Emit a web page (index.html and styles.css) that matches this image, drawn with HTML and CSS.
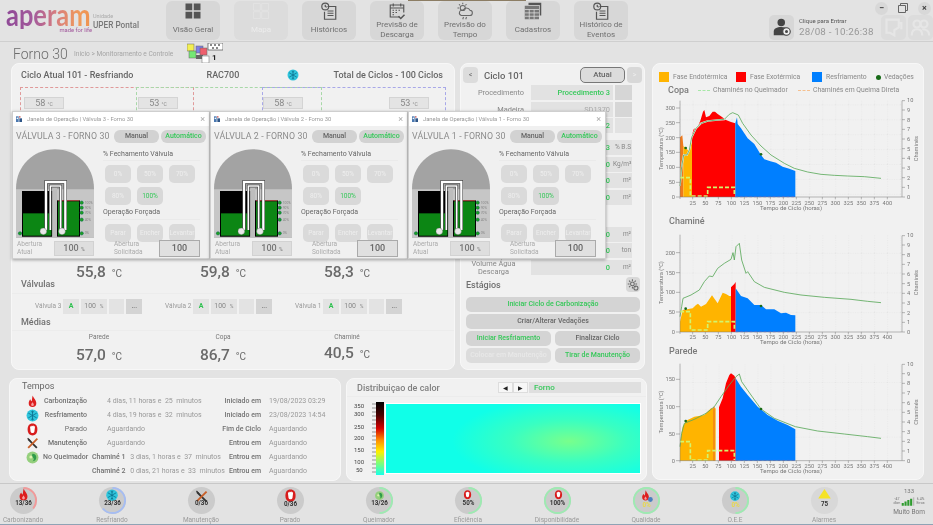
FILE: index.html
```html
<!DOCTYPE html>
<html lang="pt-BR">
<head>
<meta charset="utf-8">
<title>Forno 30</title>
<link rel="stylesheet" href="styles.css">
</head>
<body>
<svg class="defs" aria-hidden="true">
  <defs>
    <symbol id="i-grid" viewBox="0 0 24 24"><path d="M2 2h9v9H2zM13 2h9v9h-9zM2 13h9v9H2zM13 13h9v9h-9z"/></symbol>
    <symbol id="i-hist" viewBox="0 0 24 24"><g fill="none" stroke="#555" stroke-width="1.6"><path d="M10 6h11v17H6V13"/><circle cx="7" cy="6" r="4.6"/><path d="M7 3.5V6l2 1M10 12h8M10 15h8M10 18h8"/></g></symbol>
    <symbol id="i-cal" viewBox="0 0 24 24"><g fill="none" stroke="#555" stroke-width="1.5"><path d="M15 20H3V4h18v10"/><path d="M3 8h18M7 2v4M17 2v4"/><path d="M6 11h2M10 11h2M14 11h2M6 14h2M10 14h2M6 17h2"/><path d="M14 19l3 3 5-5" stroke-width="2"/></g></symbol>
    <symbol id="i-weather" viewBox="0 0 24 24"><g fill="none" stroke="#666" stroke-width="1.4"><circle cx="9" cy="8" r="3.4"/><path d="M9 1v2M2 8h2M4 3l1.5 1.5M14 3l-1.5 1.5"/><path d="M7 18h11a3.5 3.5 0 0 0 .6-7A5 5 0 0 0 9.5 11 3.6 3.6 0 0 0 7 18z"/><path d="M10 20l-1 3M14 20l-1 3"/></g></symbol>
    <symbol id="i-table" viewBox="0 0 24 24"><path fill="#555" d="M6 1h17v17h-2V4H6z"/><path fill="#777" d="M1 5h19v18H1z"/><path stroke="#e0e0e0" stroke-width="1" fill="none" d="M1 10h19M1 14.500h19M1 19h19M7 10v13M13.500 10v13"/></symbol>
    <symbol id="i-user" viewBox="0 0 24 24"><circle cx="11" cy="6" r="5" fill="#444"/><path fill="#444" d="M1 23v-5c0-4 4-6 10-6 4 0 7 1 8 3v8z"/><circle cx="18" cy="18" r="5" fill="#eee" stroke="#444" stroke-width="1.500"/><circle cx="18" cy="18" r="2" fill="#444"/></symbol>
    <symbol id="i-flame" viewBox="0 0 24 24"><path fill="#dd1f1f" d="M12.500 1c1 5 6.500 8 6.500 14a7 7 0 0 1-14 0c0-3 1.500-5 3-7 .5 2 1.200 3 2.500 3.500C11.500 8 11 5 12.500 1z"/><path fill="#f6a0a0" d="M12 13c.6 2 2.500 3 2.500 5a2.500 2.500 0 0 1-5 0c0-2 2-3 2.500-5z"/></symbol>
    <symbol id="i-snow" viewBox="0 0 24 24"><circle cx="12" cy="12" r="11" fill="#2fc5dc"/><g stroke="#0c6f8c" stroke-width="1.500" fill="none"><path d="M12 3v18M4.200 7.500l15.600 9M19.800 7.500l-15.600 9"/><path d="M9.500 4.500l2.500 2 2.500-2M9.500 19.500l2.500-2 2.500 2"/></g></symbol>
    <symbol id="i-stop" viewBox="0 0 24 24"><path fill="#d81d1d" d="M12 1c6 0 9 4 9 11s-4 11-9 11-9-4-9-11S6 1 12 1z"/><path fill="#fff" d="M7.500 8c0-2 1.500-3 2-1 0-2 2-3 2.500-1 .5-2 2.500-1.500 2.500.5 1-1 2.500-.5 2 1.500l-1 8c-1 3-6 3-7 0z"/></symbol>
    <symbol id="i-tools" viewBox="0 0 24 24"><path stroke="#333" stroke-width="3.400" d="M4 4l16 16"/><path stroke="#c8602a" stroke-width="3.400" d="M21 3L4 20"/><path stroke="#333" stroke-width="2" d="M3 2l5 5"/></symbol>
    <symbol id="i-burn" viewBox="0 0 24 24"><circle cx="12" cy="12" r="11" fill="#95cf7d"/><path fill="#2f9c49" d="M12 5a7 7 0 0 1 7 7c0 4-3 7-7 7 3-2 3-5 1-7-1-1-3-4-1-7z"/><circle cx="9" cy="11" r="2.800" fill="#dff3b0"/></symbol>
    <symbol id="i-gear" viewBox="0 0 24 24"><g fill="none" stroke="#666" stroke-width="1.800"><circle cx="11" cy="11" r="3.200"/><path d="M11 3v3M11 16v3M3 11h3M16 11h3M5.300 5.300l2 2M14.700 14.700l2 2M16.700 5.300l-2 2M7.300 14.700l-2 2"/><circle cx="17" cy="18" r="3.500"/></g></symbol>
    <symbol id="i-win" viewBox="0 0 24 24"><path fill="#4a78b0" d="M3 4h8v17H3z"/><path fill="#c23c3c" d="M13 3h3v5h-3z"/><path fill="#2f5688" d="M13 10h8v11h-8z"/><circle cx="7" cy="10" r="2.500" fill="#fff"/></symbol>

    <symbol id="i-furnace" viewBox="48 130 234 265">
      <path fill="#a3a3a3" d="M48 395V248C48 180 100 130 165 130s117 50 117 118v147z"/>
      <path fill="#c6c6c6" d="M48 250h234v145H48z"/>
      <path fill="#000" d="M66 255h91v137H66z"/>
      <path fill="#0c8614" d="M69 322h85v67H69z"/>
      <path fill="#000" d="M171 283h69v109h-69z"/>
      <path fill="#0c8614" d="M174 286h63v103h-63z"/>
      <path stroke="#e04040" stroke-width="2" d="M174 284h64"/>
      <path fill="#bdbdbd" d="M157 245h14v150h-14z"/>
      <g fill="none">
        <path stroke="#222" stroke-width="10" d="M138 372V228h58v144"/>
        <path stroke="#fff" stroke-width="7" d="M138 372V228h58v144"/>
        <path stroke="#222" stroke-width="8" d="M151 372V240h31v132"/>
        <path stroke="#fff" stroke-width="5" d="M151 372V240h31v132"/>
      </g>
      <circle cx="130" cy="376" r="10" fill="#e8e8e8" stroke="#555"/>
      <circle cx="186" cy="376" r="10" fill="#e8e8e8" stroke="#555"/>
      <g fill="#1ea01e" stroke="#065" stroke-width="1.500">
        <circle cx="245" cy="290" r="5"/><circle cx="245" cy="305" r="5"/><circle cx="245" cy="320" r="5"/><circle cx="245" cy="341" r="5"/><circle cx="245" cy="382" r="5"/><circle cx="60" cy="382" r="5"/>
      </g>
      <g font-family="Roboto, sans-serif" font-size="10" fill="#888">
        <text x="254" y="293">100%</text><text x="254" y="308">90%</text><text x="254" y="323">70%</text><text x="254" y="344">40%</text><text x="254" y="385">0%</text>
      </g>
    </symbol>

    <pattern id="grid-c" patternUnits="userSpaceOnUse" x="86" y="0" width="38.900" height="44.700" patternTransform="translate(0 -0.800)"><path d="M0 0v44.700M0 0h38.900" stroke="#cfcfcf" stroke-width="1.500" stroke-dasharray="3 4" fill="none"/></pattern>
    <pattern id="grid-h" patternUnits="userSpaceOnUse" x="86" y="10" width="38.900" height="59.300"><path d="M0 0v59.300M0 0h38.900" stroke="#cfcfcf" stroke-width="1.500" stroke-dasharray="3 4" fill="none"/></pattern>
    <pattern id="grid-p" patternUnits="userSpaceOnUse" x="86" y="24" width="38.900" height="82"><path d="M0 0v82M0 0h38.900" stroke="#cfcfcf" stroke-width="1.500" stroke-dasharray="3 4" fill="none"/></pattern>

    <g id="x-labels" font-family="Roboto, sans-serif" font-size="17" fill="#777" text-anchor="middle">
      <text x="125">25</text><text x="163">50</text><text x="202">75</text><text x="241">100</text><text x="280">125</text><text x="319">150</text><text x="358">175</text><text x="397">200</text><text x="436">225</text><text x="475">250</text><text x="514">275</text><text x="553">300</text><text x="592">325</text><text x="631">350</text><text x="670">375</text><text x="709">400</text>
      <text x="420" y="15" font-size="18">Tempo de Ciclo (horas)</text>
    </g>
    <g id="r-axis" font-family="Roboto, sans-serif" font-size="17" fill="#777">
      <text x="768" y="6">0</text><text x="768" y="-23">1</text><text x="768" y="-52">2</text><text x="768" y="-81">3</text><text x="768" y="-110">4</text><text x="768" y="-139">5</text><text x="768" y="-168">6</text><text x="768" y="-197">7</text><text x="768" y="-226">8</text><text x="768" y="-255">9</text><text x="768" y="-284">10</text>
      <path fill="none" stroke="#777" stroke-width="1.500" d="M753 0v-289M753 0h9M753-29h9M753-58h9M753-87h9M753-116h9M753-145h9M753-174h9M753-203h9M753-232h9M753-261h9M753-289h9"/>
    </g>
  </defs>
</svg>

<div class="top-sliver"></div>

<div class="app">
  <header class="header">
    <div class="brand">
      <div class="logo">
        <span class="logo-word">aperam</span>
        <span class="logo-tag">made for life</span>
      </div>
      <div class="unit"><span class="unit-cap">Unidade</span><strong>UPER Pontal</strong></div>
    </div>
    <nav class="nav">
      <a class="nav-btn"><svg class="nav-ico fill-dark"><use href="#i-grid"/></svg><span>Visão Geral</span></a>
      <a class="nav-btn off"><svg class="nav-ico fill-faint"><use href="#i-grid"/></svg><span>Mapa</span></a>
      <a class="nav-btn"><svg class="nav-ico"><use href="#i-hist"/></svg><span>Históricos</span></a>
      <a class="nav-btn"><svg class="nav-ico"><use href="#i-cal"/></svg><span>Previsão de Descarga</span></a>
      <a class="nav-btn"><svg class="nav-ico"><use href="#i-weather"/></svg><span>Previsão do Tempo</span></a>
      <a class="nav-btn"><svg class="nav-ico"><use href="#i-table"/></svg><span>Cadastros</span></a>
      <a class="nav-btn"><svg class="nav-ico"><use href="#i-hist"/></svg><span>Histórico de Eventos</span></a>
    </nav>
    <div class="session">
      <div class="win-ctl">
        <span class="ctl ctl-round">&#8722;</span>
        <svg class="ctl-svg" viewBox="0 0 12 12"><path fill="none" stroke="#666" d="M1.500 3.500h7v7h-7zM3.500 3.500v-2h7v7h-2"/></svg>
        <span class="ctl ctl-round">&#215;</span>
      </div>
      <div class="login">
        <span class="user-btn"><svg class="user-ico"><use href="#i-user"/></svg></span>
        <div class="login-txt"><span class="login-cap">Clique para Entrar</span><span class="login-time">28/08 - 10:26:38</span></div>
        <span class="ghost-btn"><svg viewBox="0 0 24 24"><path fill="none" stroke="#e6e6e6" stroke-width="2.500" d="M4 3h14v9l-5 3v6l-5-3H4zM18 7h3v7"/></svg></span>
        <span class="ghost-btn"><svg viewBox="0 0 24 24"><g fill="none" stroke="#e6e6e6" stroke-width="2.500"><circle cx="8" cy="8" r="4"/><circle cx="16" cy="8" r="4"/><path d="M2 21c0-5 3-7 6-7s6 2 6 7M14 14c4 0 8 2 8 7"/></g></svg></span>
      </div>
    </div>
  </header>

  <div class="crumbs">
    <h1>Forno 30</h1>
    <span class="crumb-path">Início &gt; Monitoramento e Controle</span>
    <svg class="mosaic" viewBox="0 0 36 20">
      <rect x="0" y="1" width="7" height="7" fill="#f3ef52" stroke="#666" stroke-width=".5"/>
      <rect x="9" y="3" width="7" height="7" fill="#7f7fe6" stroke="#666" stroke-width=".5"/>
      <rect x="13" y="5" width="7" height="7" fill="#ee5f6d" stroke="#666" stroke-width=".5"/>
      <rect x="2" y="8" width="7" height="7" fill="#74e874" stroke="#666" stroke-width=".5"/>
      <rect x="9" y="12" width="7" height="4" fill="#666"/>
      <rect x="15" y="13" width="7" height="7" fill="#fff" stroke="#666" stroke-width=".5"/>
      <rect x="21" y="0" width="15" height="7" fill="#fff" stroke="#333" stroke-width=".6"/>
      <path d="M23 2h2M27 2h2M31 2h2M25 5h2M29 5h2" stroke="#111"/>
      <text x="25" y="17" font-family="Roboto, sans-serif" font-size="8" font-weight="700" fill="#222">1</text>
    </svg>
  </div>

  <main class="content">
    <div class="left-col">
      <div class="upper">
        <section class="panel furnace">
          <div class="furnace-head">
            <b>Ciclo Atual 101 - Resfriando</b>
            <b class="rac">RAC700</b>
            <svg class="head-snow"><use href="#i-snow"/></svg>
            <b class="total">Total de Ciclos - 100 Ciclos</b>
          </div>
          <div class="diagram">
            <i class="zone zone-r"></i><i class="zone zone-g"></i><i class="zone zone-b"></i>
            <span class="probe p1">58 <small>°C</small></span>
            <span class="probe p2">53 <small>°C</small></span>
            <span class="probe p3">58 <small>°C</small></span>
            <span class="probe p4">53 <small>°C</small></span>
          </div>
          <div class="temp-row">
            <div class="temp">55,8 <small>°C</small></div>
            <div class="temp">59,8 <small>°C</small></div>
            <div class="temp">58,3 <small>°C</small></div>
          </div>
          <h2 class="sec valv-title">Válvulas</h2>
          <div class="valves">
            <div class="valve"><span class="v-name">Válvula 3</span><span class="v-cell v-a">A</span><span class="v-cell v-pct">100 <small>%</small></span><span class="v-cell v-blank"></span><span class="v-cell v-more">...</span></div>
            <div class="valve"><span class="v-name">Válvula 2</span><span class="v-cell v-a">A</span><span class="v-cell v-pct">100 <small>%</small></span><span class="v-cell v-blank"></span><span class="v-cell v-more">...</span></div>
            <div class="valve"><span class="v-name">Válvula 1</span><span class="v-cell v-a">A</span><span class="v-cell v-pct">100 <small>%</small></span><span class="v-cell v-blank"></span><span class="v-cell v-more">...</span></div>
          </div>
          <h2 class="sec med-title">Médias</h2>
          <div class="temp-row avg-labels">
            <div>Parede</div><div>Copa</div><div>Chaminé</div>
          </div>
          <div class="temp-row avg-vals">
            <div class="temp">57,0 <small>°C</small></div>
            <div class="temp">86,7 <small>°C</small></div>
            <div class="temp up">40,5 <small>°C</small></div>
          </div>
        </section>

        <section class="panel cycle">
          <div class="cycle-head">
            <span class="sq-btn">&lt;</span>
            <b>Ciclo 101</b>
            <span class="now-btn">Atual</span>
            <span class="sq-btn faint">&gt;</span>
          </div>
          <div class="rows">
            <div class="row"><label>Procedimento</label><span class="val green">Procedimento 3</span><span class="aux"></span></div>
            <div class="row"><label>Madeira</label><span class="val faintval">SD1370</span><span class="aux"></span></div>
            <div class="row"><label></label><span class="val green">2</span><span class="aux hide"></span></div>
          </div>
          <div class="rows r2">
            <div class="row"><label></label><span class="val green">3</span><span class="unit-box">% B.S</span></div>
            <div class="row"><label></label><span class="val green">0</span><span class="unit-box">Kg/m³</span></div>
            <div class="row"><label></label><span class="val green">0</span><span class="unit-box">m²</span></div>
            <div class="row"><label></label><span class="val green">0</span><span class="unit-box">m²</span></div>
          </div>
          <div class="rows r3">
            <div class="row"><label></label><span class="val green">0</span><span class="unit-box">m²</span></div>
            <div class="row"><label></label><span class="val green">0</span><span class="unit-box">ton</span></div>
            <div class="row"><label class="two">Volume Água Descarga</label><span class="val green">0</span><span class="unit-box">m²</span></div>
          </div>
          <div class="stage-head">
            <h2 class="sec">Estágios</h2>
            <span class="gear"><svg><use href="#i-gear"/></svg></span>
          </div>
          <div class="stages">
            <button class="stage wide green">Iniciar Ciclo de Carbonização</button>
            <button class="stage wide">Criar/Alterar Vedações</button>
            <button class="stage green">Iniciar Resfriamento</button>
            <button class="stage">Finalizar Ciclo</button>
            <button class="stage dim">Colocar em Manutenção</button>
            <button class="stage green">Tirar de Manutenção</button>
          </div>
        </section>
      </div>

      <div class="lower">
        <section class="panel times">
          <h2 class="t-title">Tempos</h2>
          <div class="t-grid">
            <svg class="t-ico"><use href="#i-flame"/></svg><b>Carbonização</b><span class="t-val">4 dias, 11 horas e &nbsp;25 &nbsp;minutos</span><b>Iniciado em</b><span class="t-date">19/08/2023 03:29</span>
            <svg class="t-ico"><use href="#i-snow"/></svg><b>Resfriamento</b><span class="t-val">4 dias, 19 horas e &nbsp;32 &nbsp;minutos</span><b>Iniciado em</b><span class="t-date">23/08/2023 14:54</span>
            <svg class="t-ico"><use href="#i-stop"/></svg><b class="lt">Parado</b><span class="t-val">Aguardando</span><b>Fim de Ciclo</b><span class="t-date">Aguardando</span>
            <svg class="t-ico"><use href="#i-tools"/></svg><b>Manutenção</b><span class="t-val">Aguardando</span><b>Entrou em</b><span class="t-date">Aguardando</span>
            <svg class="t-ico"><use href="#i-burn"/></svg><b>No Queimador</b><span class="t-val ch"><b>Chaminé 1</b> 3 dias, 1 horas e &nbsp;37 &nbsp;minutos</span><b>Entrou em</b><span class="t-date">Aguardando</span>
            <i></i><i></i><span class="t-val ch"><b>Chaminé 2</b> 0 dias, 21 horas e &nbsp;33 &nbsp;minutos</span><b>Entrou em</b><span class="t-date">Aguardando</span>
          </div>
        </section>

        <section class="panel heat">
          <div class="heat-head">
            <h2>Distribuiçao de calor</h2>
            <span class="step-btns"><span class="step">&#9664;</span><span class="step">&#9654;</span></span>
            <span class="heat-name">Forno</span>
          </div>
          <div class="heat-body">
            <svg class="scale" viewBox="0 0 38 74">
              <defs><linearGradient id="heat-grad" x1="0" y1="0" x2="0" y2="1"><stop offset="0" stop-color="#000"/><stop offset=".18" stop-color="#4a0000"/><stop offset=".36" stop-color="#d40000"/><stop offset=".52" stop-color="#ff8c00"/><stop offset=".68" stop-color="#ffef00"/><stop offset=".84" stop-color="#7dff7a"/><stop offset="1" stop-color="#18ffe8"/></linearGradient></defs>
              <rect x="29" y="0" width="8" height="73" fill="url(#heat-grad)"/>
              <path d="M25 2h4M25 6h4M25 10h4M25 14h4M25 18h4M25 22h4M25 26h4M25 30h4M25 34h4M25 38h4M25 42h4M25 46h4M25 50h4M25 54h4M25 58h4M25 62h4M25 66h4M25 70h4" stroke="#555" stroke-width=".6"/>
              <g font-family="Roboto, sans-serif" font-size="6" fill="#444">
                <text x="7" y="6">350</text><text x="7" y="14">300</text><text x="7" y="27">250</text><text x="7" y="38">200</text><text x="7" y="50">150</text><text x="7" y="62">100</text><text x="9" y="70">50</text>
              </g>
            </svg>
            <div class="heatmap"></div>
          </div>
        </section>
      </div>
    </div>

    <section class="panel charts">
      <div class="legend l1">
        <i class="sw sw-y"></i><span class="l-a">Fase Endotérmica</span>
        <i class="sw sw-r"></i><span class="l-b">Fase Exotérmica</span>
        <i class="sw sw-b"></i><span class="l-c">Resfriamento</span>
        <i class="dot"></i><span>Vedações</span>
      </div>
      <div class="legend l2">
        <b class="ch-title">Copa</b>
        <i class="dash dg"></i><span class="l-d">Chaminés no Queimador</span>
        <i class="dash do"></i><span>Chaminés em Queima Direta</span>
      </div>
      <svg class="chart" viewBox="6 105 816 354">
        <rect x="86" y="120" width="667" height="291" fill="url(#grid-c)"/>
        <path fill="#f07a1c" d="M87 411V232l7-6 3 32v153z"/>
        <path fill="#ffb400" d="M97 411V258l8 6 7 8 6-7 5-25v171z"/>
        <path fill="#f00" d="M123 411V225l5-17 12-8 8-18 8-27 4-5 5 22 10-4 10-13h7l8 7 12 8 13 10 15 6 13 4v221z"/>
        <path fill="#007fff" d="M253 411V190l5-18 2 20 10 13 20 30 20 17 20 33 10 13 18 6 17 4 20 12 20 6 18 7v78z"/>
        <path fill="none" stroke="#3a6ff0" stroke-width="3" stroke-dasharray="8 6" d="M253 410h180"/>
        <path fill="none" stroke="#f4f4f4" stroke-width="5" d="M87 378l5-58 6-35h10l7-15 7-38 13-27 15-15 20-7 30-3 20-2 15-15 10-5 17 7 13 25 25 35 30 33 30 27 40 25 30 15 40 11 40 7 40 3 40 2 50 2 50 5"/>
        <path fill="none" stroke="#5aa85a" stroke-width="2.500" d="M87 378l5-58 6-35h10l7-15 7-38 13-27 15-15 20-7 30-3 20-2 15-15 10-5 17 7 13 25 25 35 30 33 30 27 40 25 30 15 40 11 40 7 40 3 40 2 50 2 50 5"/>
        <path fill="none" stroke="#d2f56d" stroke-width="5" stroke-dasharray="12 6" d="M87 353h31v55h52v-26h80v26"/>
        <circle cx="104" cy="264" r="4" fill="#186b18"/><circle cx="330" cy="283" r="4" fill="#186b18"/>
        <path fill="none" stroke="#777" stroke-width="1.500" d="M87 122v295M75 411h678M75 144h12M75 188h12M75 233h12M75 277h12M75 322h12M75 367h12M125 411v7M163 411v7M202 411v7M241 411v7M280 411v7M319 411v7M358 411v7M397 411v7M436 411v7M475 411v7M514 411v7M553 411v7M592 411v7M631 411v7M670 411v7M709 411v7"/>
        <g font-family="Roboto, sans-serif" font-size="17" fill="#777" text-anchor="end"><text x="72" y="150">300</text><text x="72" y="194">250</text><text x="72" y="239">200</text><text x="72" y="283">150</text><text x="72" y="328">100</text><text x="72" y="373">50</text><text x="72" y="417">0</text></g>
        <text class="ax-t" transform="translate(37 266) rotate(-90)">Temperatura (°C)</text>
        <text class="ax-t" transform="translate(800 266) rotate(-90)">Chaminés</text>
        <use href="#r-axis" y="411"/>
        <use href="#x-labels" y="434"/>
      </svg>
      <div class="ch-head"><b class="ch-title">Chaminé</b></div>
      <svg class="chart short" viewBox="6 66 816 342">
        <rect x="86" y="74" width="667" height="292" fill="url(#grid-h)"/>
        <path fill="#ffb400" d="M87 366v-31l8-35 30-5 10-10 6-4 9 9 15-8 18-26 17 24 15-32 10 4 10 6h5v108z"/>
        <path fill="#f00" d="M240 366V232l10-10 4-6v150z"/>
        <path fill="#007fff" d="M254 366V235l16 23 20 7 20 20h20l15 13h25l20 12 15-2 15 7 13 1v50z"/>
        <path fill="none" stroke="#3a6ff0" stroke-width="3" stroke-dasharray="8 6" d="M254 365h180"/>
        <path fill="none" stroke="#5aa85a" stroke-width="2.500" d="M87 320l5-30 4-25 24-10 25-15 15-25 15-17 10 2 15-25 20-15 20-12 6-20 4 22 5-40 10-10 7 50 13 40 5-5 20 30 30 17 60 15 50 8 70 7 80 6 50 6 40 4"/>
        <path fill="none" stroke="#d2f56d" stroke-width="5" stroke-dasharray="12 6" d="M87 305h31v55h52v-25h80v25"/>
        <circle cx="104" cy="296" r="4" fill="#186b18"/><circle cx="330" cy="288" r="4" fill="#186b18"/>
        <path fill="none" stroke="#777" stroke-width="1.500" d="M87 74v298M75 366h678M75 128h12M75 188h12M75 247h12M75 306h12M125 366v7M163 366v7M202 366v7M241 366v7M280 366v7M319 366v7M358 366v7M397 366v7M436 366v7M475 366v7M514 366v7M553 366v7M592 366v7M631 366v7M670 366v7M709 366v7"/>
        <g font-family="Roboto, sans-serif" font-size="17" fill="#777" text-anchor="end"><text x="72" y="134">200</text><text x="72" y="194">150</text><text x="72" y="253">100</text><text x="72" y="312">50</text><text x="72" y="372">0</text></g>
        <text class="ax-t" transform="translate(37 218) rotate(-90)">Temperatura (°C)</text>
        <text class="ax-t" transform="translate(800 218) rotate(-90)">Chaminés</text>
        <use href="#r-axis" y="366"/>
        <use href="#x-labels" y="386"/>
      </svg>
      <div class="ch-head h2"><b class="ch-title">Parede</b></div>
      <svg class="chart" viewBox="6 444 816 354">
        <rect x="86" y="461" width="667" height="291" fill="url(#grid-p)"/>
        <path fill="#ffb400" d="M87 752v-52l8-50 10-18 25-12 30-5 20-20h14v157z"/>
        <path fill="#f07a1c" d="M187 590h4v162h-4z"/>
        <path fill="#f00" d="M204 752V592l11-27 10-45 10-25 5-5 10 7 4 8v247z"/>
        <path fill="#007fff" d="M254 752V505l16 25 20 25 30 35 30 25 30 17 30 13 23 13v94z"/>
        <path fill="none" stroke="#3a6ff0" stroke-width="3" stroke-dasharray="8 6" d="M254 751h180"/>
        <path fill="none" stroke="#5aa85a" stroke-width="2.500" d="M87 710l5-40 8-30 30-12 35-18 25-20 20-30 25-35 20-25 10-8 7 23 28 40 30 42 40 28 63 25 67 13 80 9 70 8 40 5"/>
        <path fill="none" stroke="#d2f56d" stroke-width="5" stroke-dasharray="12 6" d="M87 695h31v55h52v-28h80v28"/>
        <circle cx="104" cy="633" r="4" fill="#186b18"/><circle cx="330" cy="597" r="4" fill="#186b18"/>
        <path fill="none" stroke="#777" stroke-width="1.500" d="M87 461v297M75 752h678M75 508h12M75 590h12M75 672h12M125 752v7M163 752v7M202 752v7M241 752v7M280 752v7M319 752v7M358 752v7M397 752v7M436 752v7M475 752v7M514 752v7M553 752v7M592 752v7M631 752v7M670 752v7M709 752v7"/>
        <g font-family="Roboto, sans-serif" font-size="17" fill="#777" text-anchor="end"><text x="72" y="514">150</text><text x="72" y="596">100</text><text x="72" y="678">50</text><text x="72" y="758">0</text></g>
        <text class="ax-t" transform="translate(37 606) rotate(-90)">Temperatura (°C)</text>
        <text class="ax-t" transform="translate(800 606) rotate(-90)">Chaminés</text>
        <use href="#r-axis" y="752"/>
        <use href="#x-labels" y="774"/>
      </svg>
    </section>
  </main>

  <footer class="footer">
    <div class="gauge"><svg viewBox="0 0 30 30"><circle class="g-bg" cx="15" cy="15" r="14"/><circle class="g-arc a-red" cx="15" cy="15" r="13" pathLength="100" stroke-dasharray="36 100"/><use href="#i-flame" x="8" y="2" width="14" height="14"/><text x="15" y="20">13/36</text></svg><span>Carbonizando</span></div>
    <div class="gauge"><svg viewBox="0 0 30 30"><circle class="g-bg" cx="15" cy="15" r="14"/><circle class="g-arc a-blue" cx="15" cy="15" r="13" pathLength="100" stroke-dasharray="64 100"/><use href="#i-snow" x="8" y="3" width="13" height="13"/><text x="15" y="20">23/36</text></svg><span>Resfriando</span></div>
    <div class="gauge"><svg viewBox="0 0 30 30"><circle class="g-bg" cx="15" cy="15" r="14"/><use href="#i-tools" x="8" y="4" width="14" height="14"/><text x="15" y="20">0/36</text></svg><span>Manutenção</span></div>
    <div class="gauge"><svg viewBox="0 0 30 30"><circle class="g-bg" cx="15" cy="15" r="14"/><use href="#i-stop" x="8" y="3" width="14" height="14"/><text x="15" y="21">0/36</text></svg><span>Parado</span></div>
    <div class="gauge"><svg viewBox="0 0 30 30"><circle class="g-bg" cx="15" cy="15" r="14"/><circle class="g-arc a-green" cx="15" cy="15" r="13" pathLength="100" stroke-dasharray="50 100"/><use href="#i-burn" x="10" y="5" width="10" height="10"/><text x="15" y="20">13/26</text></svg><span>Queimador</span></div>
    <div class="gauge"><svg viewBox="0 0 30 30"><circle class="g-bg" cx="15" cy="15" r="14"/><circle class="g-arc a-green" cx="15" cy="15" r="13" pathLength="100" stroke-dasharray="50 100"/><use href="#i-stop" x="9" y="4" width="10" height="10"/><text x="15" y="20">50%</text></svg><span>Eficiência</span></div>
    <div class="gauge"><svg viewBox="0 0 30 30"><circle class="g-bg" cx="15" cy="15" r="14"/><circle class="g-arc a-green" cx="15" cy="15" r="13" pathLength="100" stroke-dasharray="100 100"/><use href="#i-stop" x="11" y="4" width="10" height="10"/><text x="15" y="20">100%</text></svg><span>Disponibilidade</span></div>
    <div class="gauge"><svg viewBox="0 0 30 30"><circle class="g-bg" cx="15" cy="15" r="14"/><circle class="g-arc a-green" cx="15" cy="15" r="13" pathLength="100" stroke-dasharray="100 100"/><use href="#i-flame" x="8" y="4" width="12" height="12"/><circle cx="19" cy="14" r="2.500" fill="#4a80c0"/><text class="g-yellow" x="15" y="22">0%</text></svg><span>Qualidade</span></div>
    <div class="gauge"><svg viewBox="0 0 30 30"><circle class="g-bg" cx="15" cy="15" r="14"/><circle class="g-arc a-green" cx="15" cy="15" r="13" pathLength="100" stroke-dasharray="50 100"/><use href="#i-snow" x="9" y="5" width="11" height="11"/><text class="g-yellow" x="15" y="22">0%</text></svg><span>O.E.E</span></div>
    <div class="gauge"><svg viewBox="0 0 30 30"><circle class="g-bg alarm" cx="15" cy="15" r="14"/><path fill="#f5e326" d="M15 3l6.500 10h-13z"/><text x="15" y="21">75</text></svg><span>Alarmes</span></div>
    <div class="signal">
      <span class="sig-n">133</span>
      <div class="sig-mid">
        <span class="sig-s">-47<br>dbm</span>
        <svg class="sig-bars" viewBox="0 0 20 12"><path fill="#2e9c2e" d="M1 8h3v4H1zM5 6h3v6H5zM9 4h3v8H9zM13 2h3v10h-3z"/><path fill="#bbb" d="M17 0h2v12h-2z"/></svg>
        <span class="sig-s">6.4%<br>Erros</span>
      </div>
      <span class="sig-q">Muito Bom</span>
    </div>
  </footer>

  <div class="windows">
    <article class="window">
      <div class="w-bar"><svg class="w-ico"><use href="#i-win"/></svg><span>Janela de Operação | Válvula 3 - Forno 30</span><em>&#215;</em></div>
      <div class="w-head"><h3>VÁLVULA 3 - FORNO 30</h3><span class="w-mode">Manual</span><span class="w-mode green">Automático</span></div>
      <div class="w-body">
        <svg class="furn"><use href="#i-furnace"/></svg>
        <div class="w-ctl">
          <h4>% Fechamento Válvula</h4>
          <div class="w-btns"><span>0%</span><span>50%</span><span>70%</span><span>80%</span><span class="on">100%</span></div>
          <h4 class="h-force">Operação Forçada</h4>
          <div class="w-btns"><span>Parar</span><span>Encher</span><span>Levantar</span></div>
        </div>
      </div>
      <div class="w-foot">
        <div class="w-f-l"><span>Abertura<br>Atual</span><b class="w-box">100 <small>%</small></b></div>
        <div class="w-f-r"><span>Abertura<br>Solicitada</span><b class="w-input">100</b></div>
      </div>
    </article>
    <article class="window">
      <div class="w-bar"><svg class="w-ico"><use href="#i-win"/></svg><span>Janela de Operação | Válvula 2 - Forno 30</span><em>&#215;</em></div>
      <div class="w-head"><h3>VÁLVULA 2 - FORNO 30</h3><span class="w-mode">Manual</span><span class="w-mode green">Automático</span></div>
      <div class="w-body">
        <svg class="furn"><use href="#i-furnace"/></svg>
        <div class="w-ctl">
          <h4>% Fechamento Válvula</h4>
          <div class="w-btns"><span>0%</span><span>50%</span><span>70%</span><span>80%</span><span class="on">100%</span></div>
          <h4 class="h-force">Operação Forçada</h4>
          <div class="w-btns"><span>Parar</span><span>Encher</span><span>Levantar</span></div>
        </div>
      </div>
      <div class="w-foot">
        <div class="w-f-l"><span>Abertura<br>Atual</span><b class="w-box">100 <small>%</small></b></div>
        <div class="w-f-r"><span>Abertura<br>Solicitada</span><b class="w-input">100</b></div>
      </div>
    </article>
    <article class="window">
      <div class="w-bar"><svg class="w-ico"><use href="#i-win"/></svg><span>Janela de Operação | Válvula 1 - Forno 30</span><em>&#215;</em></div>
      <div class="w-head"><h3>VÁLVULA 1 - FORNO 30</h3><span class="w-mode">Manual</span><span class="w-mode green">Automático</span></div>
      <div class="w-body">
        <svg class="furn"><use href="#i-furnace"/></svg>
        <div class="w-ctl">
          <h4>% Fechamento Válvula</h4>
          <div class="w-btns"><span>0%</span><span>50%</span><span>70%</span><span>80%</span><span class="on">100%</span></div>
          <h4 class="h-force">Operação Forçada</h4>
          <div class="w-btns"><span>Parar</span><span>Encher</span><span>Levantar</span></div>
        </div>
      </div>
      <div class="w-foot">
        <div class="w-f-l"><span>Abertura<br>Atual</span><b class="w-box">100 <small>%</small></b></div>
        <div class="w-f-r"><span>Abertura<br>Solicitada</span><b class="w-input">100</b></div>
      </div>
    </article>
  </div>
</div>
</body>
</html>
```

FILE: styles.css
```css
* { box-sizing: border-box; }
html, body { margin: 0; padding: 0; }
body { width: 933px; height: 525px; overflow: hidden; background: #e3e3e3; font-family: Roboto, "Liberation Sans", sans-serif; color: #666; position: relative; }
h1, h2, h3, h4 { margin: 0; font-weight: 500; }
.defs { position: absolute; width: 0; height: 0; }
.top-sliver { position: absolute; left: 408px; top: 0; width: 118px; height: 1px; background: #8c7d64; z-index: 3; }
.app { position: relative; width: 933px; height: 525px; display: flex; flex-direction: column; filter: blur(.4px); }

/* header */
.header { height: 42px; flex: none; display: flex; border-bottom: 1px solid #cfcfcf; }
.brand { width: 166px; display: flex; flex: none; padding: 0 0 0 6px; }
.logo { width: 87px; display: flex; flex-direction: column; }
.logo-word { font-family: Lato, sans-serif; font-size: 31px; line-height: 29px; font-weight: 700; background: linear-gradient(90deg, #8f4a97 0, #a45a9c 30%, #d87e7e 55%, #f09a5a 80%, #ee8e4a 100%); -webkit-background-clip: text; background-clip: text; color: transparent; transform: scaleX(.82); transform-origin: left; white-space: nowrap; width: 112px; }
.logo-tag { font-size: 5.800px; color: #a0559a; text-align: right; margin-top: -2px; padding-right: 1px; line-height: 7px; }
.unit { display: flex; flex-direction: column; padding-top: 13px; font-size: 5.500px; color: #aaa; }
.unit strong { font-size: 8.200px; font-weight: 500; color: #777; margin-top: 1px; white-space: nowrap; }
.nav { display: flex; gap: 14px; padding-top: 1px; }
.nav-btn { width: 54px; height: 39px; background: #d7d7d7; border-radius: 6px; display: flex; flex-direction: column; align-items: center; text-align: center; font-size: 8px; line-height: 9.500px; color: #707070; padding-top: 1px; }
.nav-btn span { flex: 1; display: flex; align-items: center; justify-content: center; padding: 0 2px 1px; }
.nav-ico { width: 18px; height: 18px; flex: none; }
.fill-dark { fill: #555; }
.fill-faint { fill: none; stroke: #e4e4e4; stroke-width: 1; }
.nav-btn.off { background: #dcdcdc; color: #ececec; }
.session { flex: 1; position: relative; display: flex; flex-direction: column; align-items: flex-end; }
.win-ctl { display: flex; align-items: center; gap: 9px; height: 14px; padding-right: 2px; margin-top: 1px; }
.ctl { width: 13px; height: 13px; border-radius: 50%; background: #d8d8d8; font-size: 9px; font-weight: 700; line-height: 13px; text-align: center; color: #444; }
.ctl-svg { width: 12px; height: 12px; }
.login { display: flex; align-items: center; gap: 2px; margin-top: -1px; height: 26px; }
.user-btn { width: 25px; height: 25px; background: #d7d7d7; border-radius: 5px; display: flex; align-items: center; justify-content: center; margin-right: 3px; }
.user-ico { width: 18px; height: 18px; }
.login-txt { width: 80px; display: flex; flex-direction: column; }
.login-cap { font-size: 6px; color: #555; }
.login-time { font-size: 9.800px; color: #999; letter-spacing: .2px; margin-top: 2px; white-space: nowrap; }
.ghost-btn { width: 25px; height: 25px; background: #dcdcdc; border-radius: 5px; padding: 2px; }
.ghost-btn svg { width: 21px; height: 21px; display: block; }

/* crumbs */
.crumbs { height: 21px; flex: none; display: flex; align-items: center; padding-left: 13px; position: relative; }
.crumbs h1 { font-size: 14px; font-weight: 300; color: #6d6d6d; width: 61px; padding-top: 3px; white-space: nowrap; }
.crumb-path { font-size: 6.600px; color: #a5a5a5; white-space: nowrap; padding-top: 2px; width: 113px; }
.mosaic { width: 36px; height: 20px; }

/* panels */
.panel { background: #f1f1f1; border: 1px solid #f7f7f7; border-radius: 8px; }
.content { height: 418px; flex: none; display: flex; }
.left-col { width: 652px; flex: none; display: flex; flex-direction: column; gap: 8px; }
.upper { height: 307px; flex: none; display: flex; padding-left: 11px; gap: 5px; }
.furnace { width: 444px; flex: none; }
.furnace-head { height: 21px; display: flex; align-items: center; font-size: 9px; padding: 0 11px 0 9px; }
.furnace-head b { font-weight: 500; color: #666; white-space: nowrap; }
.rac { margin-left: 73px; }
.head-snow { width: 12px; height: 12px; margin-left: 48px; }
.total { margin-left: auto; }
.diagram { position: relative; height: 177px; }
.zone { position: absolute; top: 2px; height: 170px; border: 1px dashed; }
.zone-r { left: 8px; width: 174px; border-color: #e09a9a; }
.zone-g { left: 124px; width: 186px; border-color: #a8d8a8; }
.zone-b { left: 250px; width: 184px; border-color: #a8a8e8; }
.probe { position: absolute; top: 12px; width: 40px; height: 12px; background: #e4e4e4; border: 1px solid #d4d4d4; font-size: 9px; line-height: 10px; text-align: center; color: #888; }
.probe small { font-size: 5px; }
.p1 { left: 12px; } .p2 { left: 126px; } .p3 { left: 251px; } .p4 { left: 377px; }
.temp-row { display: grid; grid-template-columns: repeat(3, 124px); padding-left: 25px; text-align: center; }
.temp { font-size: 15.500px; font-weight: 500; line-height: 20px; color: #6a6a6a; white-space: nowrap; }
.temp small { font-size: 10px; font-weight: 400; margin-left: 2px; }
.sec { font-size: 9px; font-weight: 500; color: #707070; }
.valv-title { padding-left: 9px; height: 10px; line-height: 10px; margin-top: -5px; }
.valves { display: flex; padding: 5px 0 0 0; margin-top: 4px; border-top: 1px solid #ececec; }
.valve { width: 130px; display: flex; gap: 2px; flex: none; height: 15px; align-items: stretch; font-size: 7px; }
.v-name { width: 57px; text-align: right; line-height: 15px; color: #999; font-size: 6.500px; }
.v-cell { background: #e3e3e3; text-align: center; line-height: 15px; color: #888; }
.v-a { width: 18px; color: #2ec14f; font-weight: 700; }
.v-pct { width: 30px; }
.v-pct small { font-size: 5px; margin-left: 2px; }
.v-blank { width: 18px; }
.v-more { width: 18px; background: #d4d4d4; color: #555; }
.med-title { padding-left: 9px; height: 10px; line-height: 10px; margin-top: 3px; }
.avg-labels { margin-top: 3px; padding-top: 2px; border-top: 1px solid #ececec; font-size: 6.500px; line-height: 9px; color: #777; }
.avg-vals { margin-top: 3px; }
.up { margin-top: -2px; }

/* cycle panel */
.cycle { width: 185px; flex: none; padding: 3px 2px 0 2px; }
.cycle-head { height: 17px; display: flex; align-items: center; font-size: 9.500px; padding-bottom: 1px; }
.cycle-head b { font-weight: 500; margin-left: 6px; }
.sq-btn { width: 15px; height: 16px; background: #dcdcdc; border-radius: 4px; font-size: 7px; line-height: 16px; text-align: center; color: #666; }
.sq-btn.faint { color: #eee; background: #d8d8d8; margin-left: 2px; }
.now-btn { margin-left: auto; width: 45px; height: 16px; background: #dcdcdc; border: 1px solid #777; border-radius: 5px; text-align: center; line-height: 14px; font-size: 8px; font-weight: 500; color: #666; }
.rows { display: flex; flex-direction: column; gap: 1.500px; margin-top: 1px; }
.r2 { margin-top: 7px; }
.r3 { margin-top: 22px; }
.row { height: 15px; display: flex; align-items: stretch; font-size: 7.400px; }
.row label { width: 61px; flex: none; text-align: right; line-height: 15px; color: #888; white-space: nowrap; }
.row label.two { line-height: 8px; white-space: normal; text-align: center; }
.val { width: 82px; margin-left: 7px; background: #e2e2e2; text-align: right; line-height: 15px; padding-right: 3px; font-weight: 500; }
.val.green { color: #35c95a; }
.val.faintval { color: #aaa; font-weight: 400; }
.aux { width: 17px; margin-left: 2px; background: #d6d6d6; }
.aux.hide { background: #e2e2e2; }
.unit-box { width: 19px; background: #e2e2e2; line-height: 15px; text-align: right; font-size: 6.500px; padding-right: 1px; color: #888; white-space: nowrap; }
.stage-head { height: 16px; display: flex; align-items: center; justify-content: space-between; margin-top: 2px; padding: 0 2px 0 3px; }
.gear { width: 14px; height: 15px; background: #d7d7d7; border-radius: 4px; }
.gear svg { width: 14px; height: 15px; display: block; }
.stages { display: grid; grid-template-columns: 1fr 1fr; gap: 2px 4px; margin-top: 4px; padding: 0 2px 0 3px; }
.stage { border: 0; height: 15px; padding: 0; border-radius: 5px; background: #d4d4d4; font: 500 7px Roboto, sans-serif; color: #666; white-space: nowrap; }
.stage.wide { grid-column: 1 / -1; }
.stage.green { color: #34c858; }
.stage.dim { background: #dcdcdc; color: #e8e8e8; }

/* lower */
.lower { height: 103px; flex: none; display: flex; padding-left: 9px; gap: 5px; }
.times { width: 332px; flex: none; }
.t-title { font-size: 9px; font-weight: 400; color: #666; padding: 2px 0 0 12px; height: 15px; line-height: 11px; }
.t-grid { display: grid; grid-template-columns: 22px 44px 132px 42px 72px; grid-auto-rows: 14px; align-items: center; font-size: 7px; color: #999; white-space: nowrap; padding-left: 11px; }
.t-grid b { font-weight: 500; color: #707070; text-align: right; }
.t-ico { width: 13px; height: 13px; justify-self: center; }
.t-grid > b.lt { font-weight: 400; }
.t-val { padding-left: 20px; }
.t-val.ch { padding-left: 5px; }
.t-val.ch b { margin-right: 3px; }
.t-date { padding-left: 8px; }
.heat { width: 301px; flex: none; }
.heat-head { height: 18px; display: flex; align-items: center; padding: 0 5px 0 10px; border-bottom: 1px solid #ececec; }
.heat-head h2 { font-size: 9px; font-weight: 500; color: #808080; width: 141px; white-space: nowrap; }
.step-btns { display: flex; }
.step { width: 15px; height: 11px; background: #f7f7f7; border: 1px solid #ddd; font-size: 6px; line-height: 9px; text-align: center; color: #222; }
.heat-name { flex: 1; height: 11px; background: #dfdfdf; margin-left: 1px; color: #35c95a; font-size: 8px; font-weight: 500; padding-left: 5px; line-height: 11px; }
.heat-body { display: flex; padding: 6px 0 0 0; }
.scale { width: 38px; height: 74px; flex: none; margin-top: -1px; }
.heatmap { width: 256px; height: 71px; border: 1px solid #fff; background: radial-gradient(ellipse 46% 62% at 72% 54%, #78ff8c 0, rgba(84, 255, 168, .6) 50%, rgba(20, 255, 230, 0) 100%), #10ffe8; }

/* charts */
.charts { width: 272px; height: 417px; flex: none; overflow: hidden; }
.legend { display: flex; align-items: center; font-size: 6.800px; color: #888; white-space: nowrap; }
.l1 { height: 16px; margin-top: 5px; padding-left: 6px; }
.l2 { height: 10px; }
.sw { width: 10px; height: 10px; flex: none; margin-right: 4px; }
.sw-y { background: #ffb400; } .sw-r { background: #f00; } .sw-b { background: #007fff; }
.l-a { width: 63px; } .l-b { width: 62px; } .l-c { width: 50px; }
.dot { width: 5px; height: 5px; border-radius: 50%; background: #186b18; margin-right: 3px; }
.ch-title { font-size: 9px; font-weight: 500; color: #7a7a7a; }
.l2 .ch-title { width: 30px; margin-left: 15px; }
.dash { width: 12px; height: 0; border-top: 1px dashed; margin-right: 3px; }
.dg { border-color: #a8e8a8; } .do { border-color: #f5c090; }
.l-d { width: 85px; }
.chart { display: block; width: 272px; height: 118px; flex: none; }
.chart.short { height: 114px; }
.ax-t { font: 17px Roboto, sans-serif; fill: #777; text-anchor: middle; }
.ch-head { height: 19px; padding: 1px 0 0 16px; font-size: 9px; line-height: 14px; }
.ch-head.h2 { height: 12px; padding-top: 0; line-height: 11px; }

/* footer */
.footer { flex: 1; display: flex; gap: 43px; border-top: 1px solid #c8c8c8; border-bottom: 2px solid #8fa3b5; padding-top: 2px; position: relative; margin-top: 2px; }
.gauge { width: 46px; flex: none; display: flex; flex-direction: column; align-items: center; }
.gauge svg { width: 29px; height: 29px; flex: none; }
.gauge span { font-size: 6.500px; color: #999; white-space: nowrap; margin-top: 1px; line-height: 8px; }
.g-bg { fill: #cbcbcb; }
.g-bg.alarm { fill: #d8d8d8; }
.g-arc { fill: none; stroke-width: 2; transform: rotate(-90deg); transform-origin: 15px 15px; }
.a-red { stroke: #f29a9a; } .a-blue { stroke: #a6bdf2; } .a-green { stroke: #9eeab2; }
.gauge text { font: 700 6.500px Roboto, sans-serif; fill: #333; text-anchor: middle; }
.gauge text.g-yellow { fill: #e8d84a; }
.signal { position: absolute; right: 4px; top: 3px; width: 40px; display: flex; flex-direction: column; align-items: center; font-size: 6px; color: #777; }
.sig-mid { display: flex; align-items: center; gap: 1px; height: 12px; margin-top: 1px; }
.sig-s { font-size: 3.500px; line-height: 4px; text-align: center; }
.sig-bars { width: 14px; height: 11px; }
.sig-q { font-size: 6.500px; margin-top: 1px; }

/* floating windows */
.windows { position: absolute; left: 12px; top: 111px; display: flex; }
.window { width: 198px; height: 148px; background: #f0f0f0; border: 1px solid #cfcfcf; box-shadow: 0 1px 3px rgba(0, 0, 0, .35); display: flex; flex-direction: column; }
.w-bar { height: 14px; background: #fff; display: flex; align-items: center; font-size: 5.800px; color: #999; padding: 0 4px 0 2px; flex: none; white-space: nowrap; }
.w-ico { width: 8px; height: 8px; margin-right: 4px; }
.w-bar em { margin-left: auto; font-style: normal; font-size: 9px; color: #aaa; }
.w-head { display: flex; align-items: center; gap: 2px; height: 14px; margin-top: 3px; padding-left: 3px; flex: none; }
.w-head h3 { font-size: 8.800px; font-weight: 400; color: #8c8c8c; width: 96px; white-space: nowrap; letter-spacing: .1px; }
.w-mode { width: 45px; height: 13px; background: #d2d2d2; border-radius: 6px; text-align: center; font-size: 7px; line-height: 13px; font-weight: 500; color: #666; }
.w-mode.green { color: #34c858; }
.w-body { display: flex; height: 90px; margin-top: 6px; padding-left: 3px; gap: 9px; flex: none; }
.furn { width: 78px; height: 89px; flex: none; }
.w-ctl { width: 97px; }
.w-ctl h4 { font-size: 7px; font-weight: 400; color: #666; line-height: 10px; border-bottom: 1px solid #eaeaea; height: 12px; }
.w-btns { display: flex; flex-wrap: wrap; gap: 4px 6px; margin: 4px 0 0 2px; }
.w-btns span { width: 26px; height: 18px; background: #dadada; border-radius: 5px; text-align: center; line-height: 18px; font-size: 6.500px; color: #eee; }
.w-btns span.on { color: #34c858; background: #d8d8d8; }
.w-ctl h4.h-force { margin-top: 1px; height: 14px; line-height: 12px; }
.w-foot { display: flex; padding-left: 3px; gap: 9px; height: 18px; font-size: 6.500px; line-height: 8px; color: #aaa; }
.w-f-l { width: 78px; display: flex; align-items: center; justify-content: space-between; padding-left: 1px; }
.w-f-r { width: 97px; display: flex; align-items: center; padding-left: 11px; }
.w-box { width: 40px; height: 15px; background: #dedede; border: 1px solid #d2d2d2; font-size: 9px; line-height: 13px; text-align: center; font-weight: 500; color: #777; }
.w-box small { font-size: 5px; font-weight: 400; }
.w-input { width: 41px; height: 17px; margin-left: auto; background: #e0e0e0; border: 1px solid #aaa; font-size: 9px; line-height: 15px; text-align: center; font-weight: 500; color: #666; }
```
